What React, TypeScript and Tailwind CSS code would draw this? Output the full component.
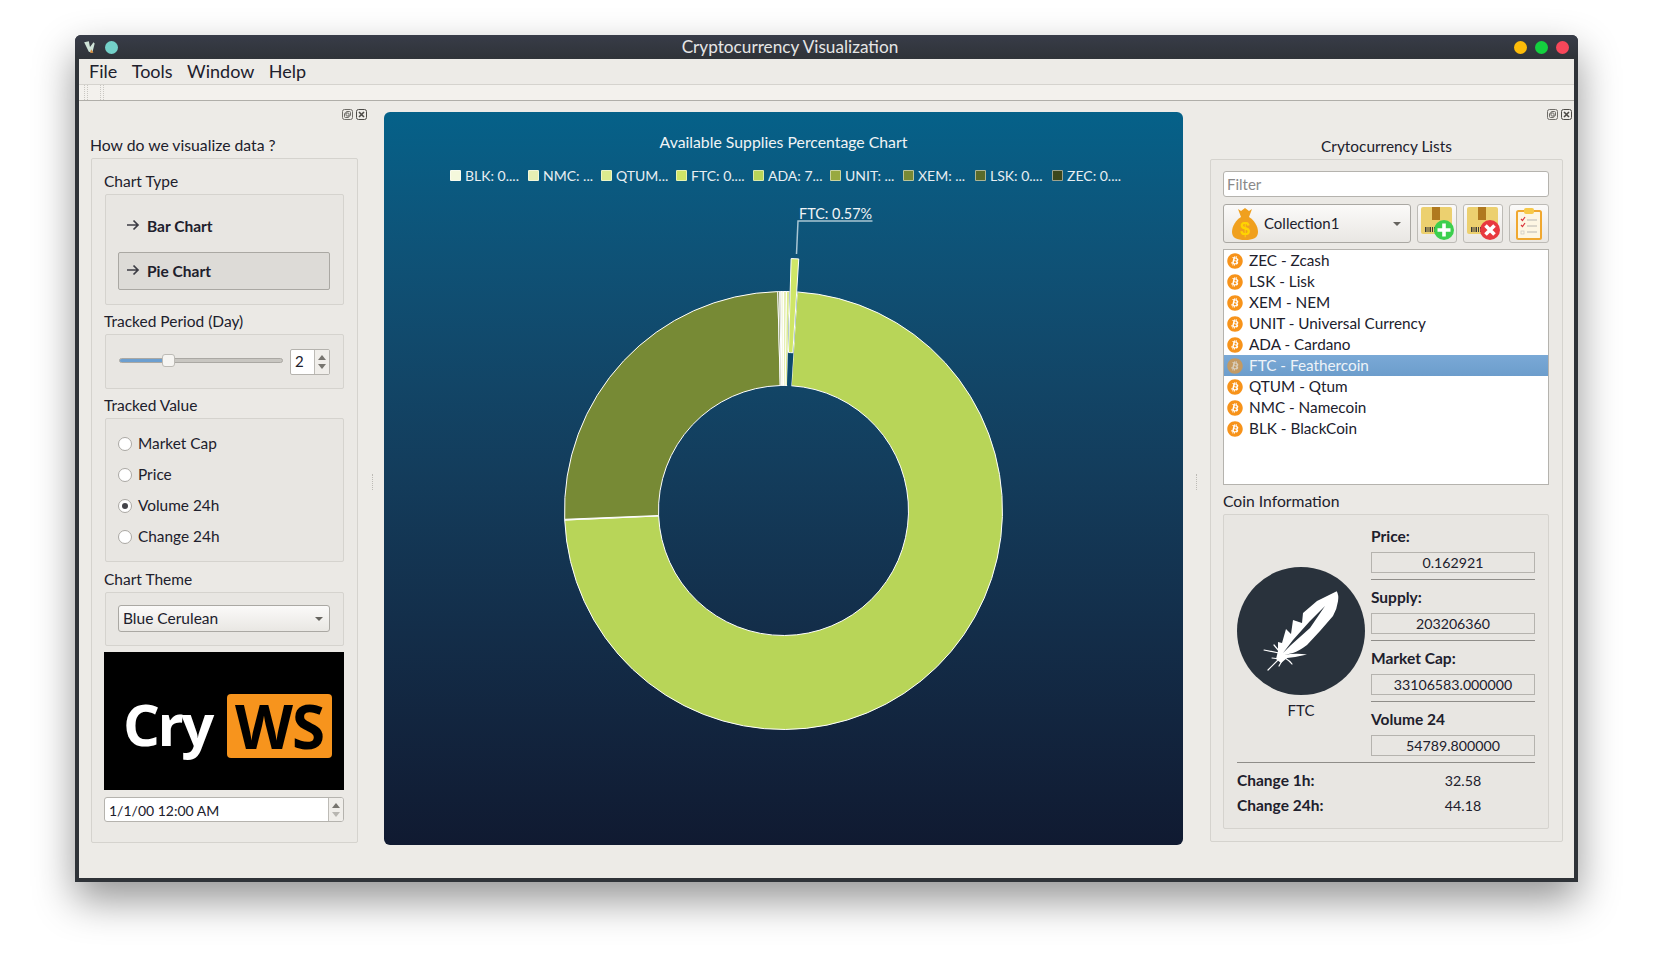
import { FaBitcoin } from "react-icons/fa";

const coins = [
  "ZEC - Zcash",
  "LSK - Lisk",
  "XEM - NEM",
  "UNIT - Universal Currency",
  "ADA - Cardano",
  "FTC - Feathercoin",
  "QTUM - Qtum",
  "NMC - Namecoin",
  "BLK - BlackCoin",
];

const legend = [
  { label: "BLK: 0....", color: "bg-[#f4f8dc]", width: "w-[78px]" },
  { label: "NMC: ...", color: "bg-[#e6efb4]", width: "w-[73px]" },
  { label: "QTUM...", color: "bg-[#dbeb8e]", width: "w-[75px]" },
  { label: "FTC: 0....", color: "bg-[#cfe667]", width: "w-[77px]" },
  { label: "ADA: 7...", color: "bg-[#b8d558]", width: "w-[77px]" },
  { label: "UNIT: ...", color: "bg-[#98a93f]", width: "w-[73px]" },
  { label: "XEM: ...", color: "bg-[#778a35]", width: "w-[72px]" },
  { label: "LSK: 0....", color: "bg-[#5b6b29]", width: "w-[77px]" },
  { label: "ZEC: 0....", color: "bg-[#3c471c]", width: "w-[70px]" },
];

const slices = [
  { from: 3.6, to: 267.5, color: "#b8d558" },
  { from: 267.5, to: 267.7, color: "#98a93f" },
  { from: 267.7, to: 358.5, color: "#778a35" },
  { from: 358.5, to: 359, color: "#5b6b29" },
  { from: 359, to: 359.3, color: "#3c471c" },
  { from: 359.3, to: 360, color: "#f4f8dc" },
  { from: 360, to: 360.8, color: "#e6efb4" },
  { from: 360.8, to: 361.6, color: "#dbeb8e" },
];

function arc(from: number, to: number, dy = 0, dx = 0) {
  const cx = 399.5 + dx;
  const cy = 322.5 + dy;
  const pt = (r: number, a: number) => {
    const t = (a * Math.PI) / 180;
    return `${(cx + r * Math.sin(t)).toFixed(2)} ${(cy - r * Math.cos(t)).toFixed(2)}`;
  };
  const large = to - from > 180 ? 1 : 0;
  return `M${pt(219, from)} A219 219 0 ${large} 1 ${pt(219, to)} L${pt(125, to)} A125 125 0 ${large} 0 ${pt(125, from)} Z`;
}

function DockButtons() {
  return (
    <div className="flex gap-[3px]">
      <svg width="11" height="11" viewBox="0 0 11 11" fill="none" stroke="#6f6d68">
        <rect x="0.5" y="0.5" width="10" height="10" rx="2" />
        <rect x="4" y="2.5" width="4.5" height="4.5" rx="1" />
        <rect x="2.5" y="4" width="4.5" height="4.5" rx="1" />
      </svg>
      <svg width="11" height="11" viewBox="0 0 11 11" fill="none" stroke="#4c4a46">
        <rect x="0.5" y="0.5" width="10" height="10" rx="2" />
        <path d="M3 3l5 5M8 3l-5 5" strokeWidth="1.6" />
      </svg>
    </div>
  );
}

function Label({ children, className = "" }: { children: React.ReactNode; className?: string }) {
  return <div className={`h-5 leading-5 text-[15.5px] ${className}`}>{children}</div>;
}

function Arrows({ dim = false }: { dim?: boolean }) {
  return (
    <div className="w-[15px] flex flex-col items-center justify-center gap-[4px] border-l border-[#bdbbb6] h-full bg-[#f0eeea]">
      <div className="w-0 h-0 border-x-[4px] border-x-transparent border-b-[5px] border-b-[#77756f]" />
      <div className={`w-0 h-0 border-x-[4px] border-x-transparent border-t-[5px] ${dim ? "border-t-[#b8b6b1]" : "border-t-[#77756f]"}`} />
    </div>
  );
}

function ComboArrow() {
  return <div className="w-0 h-0 border-x-[4px] border-x-transparent border-t-[4px] border-t-[#66645f]" />;
}

function ChartButton({ label, active = false }: { label: string; active?: boolean }) {
  return (
    <div className={`h-[38px] rounded-[2px] flex items-center pl-[7px] border ${active ? "border-[#aaa8a3] bg-[#dddbd7]" : "border-transparent"}`}>
      <svg width="14" height="14" viewBox="0 0 14 14" className="mr-[7px] -mt-[2px]" fill="none" stroke="#3c3c44" strokeWidth="1.7">
        <path d="M1 7h11M7.5 2.5 12 7l-4.5 4.5" />
      </svg>
      <span className="font-bold text-[15.5px] pt-[1px]">{label}</span>
    </div>
  );
}

function Radio({ label, checked = false }: { label: string; checked?: boolean }) {
  return (
    <div className="h-[31px] flex items-center">
      <div className="w-[14px] h-[14px] rounded-full border border-[#aaa8a3] bg-white flex items-center justify-center mr-[6px]">
        {checked && <div className="w-[6px] h-[6px] rounded-full bg-[#44444a]" />}
      </div>
      <span className="text-[15.4px]">{label}</span>
    </div>
  );
}

function Logo() {
  return (
    <div className="h-[138px] bg-black flex items-center pl-[20px] pt-[9px] font-['Open_Sans',sans-serif] font-bold leading-none">
      <span className="text-white w-[103px] text-[58px] tracking-[-2.5px] -ml-[1px] mr-[1px] -mt-[4px]">Cry</span>
      <div className="w-[105px] h-[64px] rounded-[4px] bg-[#f7941d] text-black text-[60px] flex items-center justify-center tracking-[-1px]">WS</div>
    </div>
  );
}

function MoneyBag() {
  return (
    <svg width="26" height="32" viewBox="0 0 26 32" className="shrink-0">
      <path d="M6 1l3 2 4-3 4 3 3-2-3 8H9z" fill="#f0a01e" />
      <path d="M9 9h8c5 3 9 9 9 15 0 6-5 8-13 8S0 30 0 24C0 18 4 12 9 9z" fill="#f0a01e" />
      <text x="13" y="27" textAnchor="middle" fontSize="18" fontWeight="700" fill="#ffd400" fontFamily="Liberation Sans">$</text>
    </svg>
  );
}

function Box({ add }: { add: boolean }) {
  return (
    <svg width="33" height="33" viewBox="0 0 33 33" className="ml-[1px]">
      <rect x="0" y="0" width="31" height="27" rx="2" fill="#ecd06f" />
      <rect x="11" y="0" width="8" height="13" fill="#b0791f" />
      <path d="M4 22.5h1.5M6.5 22.5h1M8.5 22.5h1.5M11 22.5h1M13 22.5h1.5" stroke="#3a3a3a" strokeWidth="5" />
      <circle cx="23" cy="23" r="10" fill={add ? "#3ccf4e" : "#e8393f"} />
      {add ? (
        <path d="M23 16.5v13M16.5 23h13" stroke="#fff" strokeWidth="3.6" />
      ) : (
        <path d="M18.5 18.5l9 9M27.5 18.5l-9 9" stroke="#fff" strokeWidth="3.6" />
      )}
    </svg>
  );
}

function Clipboard() {
  return (
    <svg width="26" height="33" viewBox="0 0 26 33">
      <rect x="1" y="4" width="24" height="28" rx="1.5" fill="#fdf6e3" stroke="#f0a830" strokeWidth="2" />
      <rect x="8" y="1" width="10" height="6" rx="2" fill="#f7c948" />
      <path d="M5 12l1.5 1.5L9 10M5 18l1.5 1.5L9 16" stroke="#d9363e" strokeWidth="1.2" fill="none" />
      <path d="M11 13h10M11 19h10M11 25h10" stroke="#b8b6b1" strokeWidth="1" />
      <rect x="5" y="24" width="3" height="3" fill="none" stroke="#c8c6c1" strokeWidth="0.7" />
    </svg>
  );
}

function InfoField({ label, value, rule = true }: { label: string; value: string; rule?: boolean }) {
  return (
    <div>
      <div className="h-5 leading-5 font-bold text-[15.5px]">{label}</div>
      <div className="mt-[6px] h-[21px] border border-[#b5b3ae] flex items-center justify-center text-[14.2px]">{value}</div>
      {rule && <div className="mt-[6px] mb-[7px] h-px bg-[#8f8d89]" />}
    </div>
  );
}

function Feather() {
  return (
    <svg width="128" height="128" viewBox="0 0 128 128">
      <circle cx="64" cy="64" r="64" fill="#29323c" />
      <path
        fillRule="evenodd"
        fill="#fff"
        d="M99.7 24.3 Q102 28 101 34.3 Q100 42 96 49 L83 64 L70 78 Q62 84 56 86 L47 88 Q58 86 70 87.5 Q60 90 50 91 L44 96 L39 92 L41 84 L41 75 L45 76 L49 62 L54 67 L56 53 L65 56 L66 46 L80 34 Z M88 39 L73 54 L56 73 L46 86 L54 78 L73 61 Z"
      />
      <path
        fill="none"
        stroke="#fff"
        strokeWidth="1.2"
        strokeLinecap="round"
        d="M42 86 L27 83 M44 90 L31 103 M42 84 L37 78 M48 91 Q53 94 55 97 M43 92 L35 91 M46 92 L42 99"
      />
    </svg>
  );
}

export default function App() {
  return (
    <div className="h-[967px] w-[1653px] bg-white pt-[35px] pl-[75px] font-['Lato',sans-serif] text-[#20202c] overflow-hidden">
      <div className="w-[1503px] h-[847px] bg-[#2f3338] rounded-t-[6px] px-[4px] pb-[4px] flex flex-col shadow-[0_18px_40px_rgba(0,0,0,0.42)]">
        {/* title bar */}
        <div className="h-[24px] shrink-0 -mx-[4px] px-[8px] rounded-t-[6px] bg-gradient-to-b from-[#383c48] to-[#2f3338] flex items-center">
          <svg width="14" height="14" viewBox="0 0 12 12" className="mr-[8px]">
            <path d="M1 2l4-1 1 5 3-4 1 1-2 8-3-1z" fill="#cfe3d8" />
            <path d="M7 8l2 3-3 0z" fill="#d98a3a" />
          </svg>
          <div className="w-[13px] h-[13px] rounded-full bg-[#74d1c9]" />
          <div className="flex-1 text-center text-[17.2px] text-[#e6e6e6] pr-[52px]">Cryptocurrency Visualization</div>
          <div className="flex gap-[8px] pr-[1px]">
            <div className="w-[13px] h-[13px] rounded-full bg-[#fdbc09]" />
            <div className="w-[13px] h-[13px] rounded-full bg-[#14d13f]" />
            <div className="w-[13px] h-[13px] rounded-full bg-[#f8475a]" />
          </div>
        </div>

        <div className="flex-1 bg-[#edebe7] flex flex-col min-h-0">
          {/* menu */}
          <div className="h-[26px] shrink-0 flex items-center pl-[10px] gap-[14.5px] text-[18px] border-b border-[#d5d3ce]">
            <span>File</span>
            <span>Tools</span>
            <span>Window</span>
            <span>Help</span>
          </div>
          {/* toolbar */}
          <div className="h-[16px] shrink-0 bg-[#f3f1ed] border-b border-[#b0aea9] flex pl-[5px] gap-[12px]">
            <div className="w-[4px] border-x border-dotted border-[#c9c7c2]" />
            <div className="w-[4px] border-x border-dotted border-[#c9c7c2]" />
          </div>

          <div className="flex-1 flex min-h-0">
            {/* left dock */}
            <div className="w-[305px] shrink-0 flex">
              <div className="w-[288px] pl-[12px] shrink-0">
                <div className="pt-[8px] h-[34px] flex justify-end">
                  <DockButtons />
                </div>
                <div className="h-5 leading-5 text-[15.75px] -ml-[1px]">How do we visualize data ?</div>
                <div className="mt-[3px] w-[267px] h-[685px] border border-[#d5d3ce] rounded-[2px] bg-[#ebe9e5] pl-[13px] pt-[12px]">
                  <Label className="-ml-[1px]">Chart Type</Label>
                  <div className="mt-[3px] w-[239px] h-[111px] border border-[#d5d3ce] rounded-[2px] bg-[#e8e6e2] pl-[12px] pr-[13px] pt-[12px] flex flex-col gap-[7px]">
                    <ChartButton label="Bar Chart" />
                    <ChartButton label="Pie Chart" active />
                  </div>

                  <Label className="mt-[6px] -ml-[1px]">Tracked Period (Day)</Label>
                  <div className="mt-[3px] w-[239px] h-[55px] border border-[#d5d3ce] rounded-[2px] bg-[#e8e6e2] flex items-center pl-[13px]">
                    <div className="relative w-[164px] h-[5px] rounded-full bg-[#c8c6c1] border border-[#aaa8a3] -mt-[3px]">
                      <div className="w-[44px] h-full rounded-full bg-[#6c9fd0]" />
                      <div className="absolute left-[42px] -top-[5px] w-[13px] h-[13px] rounded-[3px] bg-[#f6f5f2] border border-[#bdbbb6]" />
                    </div>
                    <div className="ml-[7px] w-[40px] h-[26px] border border-[#b5b3ae] rounded-[2px] bg-white flex items-center overflow-hidden">
                      <span className="flex-1 pl-[4px] text-[15px]">2</span>
                      <Arrows />
                    </div>
                  </div>

                  <Label className="mt-[6px] -ml-[1px]">Tracked Value</Label>
                  <div className="mt-[3px] w-[239px] h-[144px] border border-[#d5d3ce] rounded-[2px] bg-[#e8e6e2] pl-[12px] pt-[9px]">
                    <Radio label="Market Cap" />
                    <Radio label="Price" />
                    <Radio label="Volume 24h" checked />
                    <Radio label="Change 24h" />
                  </div>

                  <Label className="mt-[7px] -ml-[1px]">Chart Theme</Label>
                  <div className="mt-[3px] w-[239px] h-[54px] border border-[#d5d3ce] rounded-[2px] bg-[#e8e6e2] pl-[12px] pr-[13px] pt-[12px]">
                    <div className="h-[27px] rounded-[3px] border border-[#aaa8a3] bg-gradient-to-b from-[#fbfaf9] to-[#e9e7e3] flex items-center justify-between pl-[4px] pr-[6px] text-[15.5px]">
                      Blue Cerulean
                      <ComboArrow />
                    </div>
                  </div>

                  <div className="mt-[6px] w-[240px] -ml-[1px]">
                    <Logo />
                  </div>
                  <div className="mt-[7px] w-[240px] -ml-[1px] h-[25px] rounded-[3px] border border-[#b5b3ae] bg-white flex items-center overflow-hidden">
                    <span className="flex-1 pl-[4px] pt-[1px] text-[14px]">1/1/00 12:00 AM</span>
                    <Arrows dim />
                  </div>
                </div>
              </div>
              <div className="flex-1 flex items-center justify-start pl-[5px] pb-[16px]">
                <div className="h-[16px] w-px border-l border-dotted border-[#bdbbb6]" />
              </div>
            </div>

            {/* chart */}
            <div className="w-[799px] shrink-0 mt-[11px] h-[733px] rounded-[6px] bg-gradient-to-b from-[#056189] to-[#101a31] flex flex-col text-white">
              <div className="h-[20px] mt-[20px] text-center text-[15.8px] text-[#f0f4f6] leading-5">Available Supplies Percentage Chart</div>
              <div className="h-[26px] mt-[10px] pl-[66px] flex items-center text-[14px] text-[#e8eef2]">
                {legend.map((l) => (
                  <div key={l.label} className={`${l.width} flex items-center shrink-0 whitespace-nowrap`}>
                    <div className={`w-[11px] h-[11px] mr-[4px] rounded-[1px] border border-white/50 ${l.color}`} />
                    {l.label}
                  </div>
                ))}
              </div>
              <svg width="799" height="657" viewBox="0 0 799 657" className="shrink-0">
                {slices.map((s) => (
                  <path key={s.from} d={arc(s.from, s.to)} fill={s.color} stroke="#fff" strokeWidth="1" />
                ))}
                <path d={arc(1.6, 3.6)} fill="#0c4a6d" stroke="none" />
                <path d={arc(1.6, 3.6, -33, 1.5)} fill="#cfe667" stroke="#fff" strokeWidth="1" />
                <path d="M412.5 66 L414 33 H488.5" fill="none" stroke="#a9c6d4" strokeWidth="1.5" />
                <text x="415" y="31" fontSize="14.4" fill="#f0f4f6" fontFamily="Lato">FTC: 0.57%</text>
              </svg>
            </div>

            {/* right dock */}
            <div className="flex-1 flex min-w-0">
              <div className="w-[27px] shrink-0 flex items-center justify-center pb-[16px]">
                <div className="h-[16px] w-px border-l border-dotted border-[#bdbbb6]" />
              </div>
              <div className="w-[353px] shrink-0">
                <div className="pt-[8px] h-[35px] flex justify-end -mr-[9px]">
                  <DockButtons />
                </div>
                <div className="h-5 leading-5 text-center text-[15.4px]">Crytocurrency Lists</div>
                <div className="mt-[3px] w-[353px] h-[683px] border border-[#d5d3ce] rounded-[2px] bg-[#ebe9e5] pl-[12px] pt-[11px]">
                  <div className="w-[326px] h-[26px] border border-[#b5b3ae] rounded-[3px] bg-white pl-[3px] leading-[24px] text-[15px] text-[#8a8a8a]">Filter</div>
                  <div className="mt-[7px] w-[326px] h-[39px] flex gap-[6px]">
                    <div className="w-[188px] rounded-[3px] border border-[#aaa8a3] bg-gradient-to-b from-[#fbfaf9] to-[#e9e7e3] flex items-center pl-[8px] pr-[9px] text-[15px]">
                      <MoneyBag />
                      <span className="flex-1 ml-[6px]">Collection1</span>
                      <ComboArrow />
                    </div>
                    {[<Box key="add" add />, <Box key="del" add={false} />, <Clipboard key="list" />].map((icon, i) => (
                      <div key={i} className="w-[40px] rounded-[3px] border border-[#bdbbb6] bg-gradient-to-b from-[#fbfaf9] to-[#e9e7e3] flex items-center justify-center">
                        {icon}
                      </div>
                    ))}
                  </div>
                  <div className="mt-[6px] w-[326px] h-[236px] border border-[#b5b3ae] bg-white">
                    {coins.map((c, i) => (
                      <div key={c} className={`h-[21px] flex items-center text-[15.3px] pl-[3px] ${i === 5 ? "bg-gradient-to-b from-[#7aa9d6] to-[#6c9dcc] text-[#eef3f8]" : ""}`}>
                        <div className="relative w-[16px] h-[16px] mr-[6px] flex items-center justify-center">
                          <div className={`absolute inset-[2px] rounded-full ${i === 5 ? "bg-[#d9d0c0]" : "bg-white"}`} />
                          <FaBitcoin className={`relative ${i === 5 ? "text-[#c49a62]" : "text-[#f7931a]"}`} size={16} />
                        </div>
                        {c}
                      </div>
                    ))}
                  </div>

                  <div className="mt-[6px] h-5 leading-5 text-[15.7px]">Coin Information</div>
                  <div className="mt-[3px] w-[326px] h-[315px] border border-[#d5d3ce] rounded-[2px] bg-[#e8e6e2] pl-[13px] pr-[11px] pt-[11px]">
                    <div className="flex">
                      <div className="w-[134px] shrink-0 pt-[41px]">
                        <Feather />
                        <div className="w-[128px] mt-[4px] text-center text-[15px]">FTC</div>
                      </div>
                      <div className="w-[164px]">
                        <InfoField label="Price:" value="0.162921" />
                        <InfoField label="Supply:" value="203206360" />
                        <InfoField label="Market Cap:" value="33106583.000000" />
                        <InfoField label="Volume 24" value="54789.800000" rule={false} />
                      </div>
                    </div>
                    <div className="mt-[6px] w-[298px] h-px bg-[#8f8d89]" />
                    <div className="mt-[8px] w-[298px] flex h-[20px] items-center text-[15.5px]">
                      <span className="w-[199px] font-bold">Change 1h:</span>
                      <span className="w-[54px] text-center text-[14.2px]">32.58</span>
                    </div>
                    <div className="mt-[5px] w-[298px] flex h-[20px] items-center text-[15.5px]">
                      <span className="w-[199px] font-bold">Change 24h:</span>
                      <span className="w-[54px] text-center text-[14.2px]">44.18</span>
                    </div>
                  </div>
                </div>
              </div>
            </div>
          </div>
        </div>
      </div>
    </div>
  );
}
